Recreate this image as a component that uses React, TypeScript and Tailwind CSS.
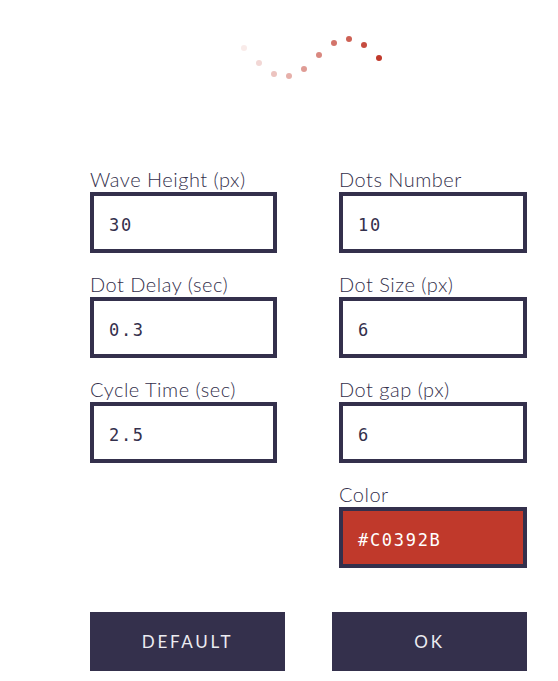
const offsets = [48, 63, 74, 76, 69, 55, 43, 39, 45, 58];

const fields = [
  { label: "Wave Height (px)", value: "30" },
  { label: "Dots Number", value: "10" },
  { label: "Dot Delay (sec)", value: "0.3" },
  { label: "Dot Size (px)", value: "6" },
  { label: "Cycle Time (sec)", value: "2.5" },
  { label: "Dot gap (px)", value: "6" },
];

function Field({ label, value, color }: { label: string; value: string; color?: boolean }) {
  return (
    <div className="flex flex-col">
      <label className="h-[24px] mb-[2px] pt-[1px] text-[20px] leading-[24px] font-light tracking-[0.5px] text-[#34304c]">{label}</label>
      <div
        className={
          "h-[61px] border-4 border-[#34304c] flex items-center pl-[15px] pt-[6px] font-['DejaVu_Sans_Mono',monospace] text-[17px] tracking-[0.1em] " +
          (color ? "bg-[#C0392B] text-white" : "bg-white text-[#34304c]")
        }
      >
        {value}
      </div>
    </div>
  );
}

export default function App() {
  return (
    <div className="w-[558px] h-[681px] bg-white font-['Lato',sans-serif] overflow-hidden">
      <div className="h-[166px] flex justify-center pl-[64px]">
        <div className="relative w-[141px] h-[100px]">
          {offsets.map((y, i) => (
            <span
              key={i}
              className="absolute w-[6px] h-[6px] rounded-full bg-[#C0392B]"
              style={{ left: i * 15, top: y - 3, opacity: 0.1 + i * 0.1 }}
            />
          ))}
        </div>
      </div>
      <div className="ml-[90px] w-[437px]">
        <div className="grid grid-cols-[187px_188px] gap-x-[62px] gap-y-[18px]">
          {fields.map((f) => (
            <Field key={f.label} label={f.label} value={f.value} />
          ))}
          <div />
          <Field label="Color" value="#C0392B" color />
        </div>
        <div className="mt-[44px] flex justify-between">
          <button className="w-[195px] h-[59px] bg-[#34304c] text-[#ececf1] text-[17px] tracking-[0.16em]">DEFAULT</button>
          <button className="w-[195px] h-[59px] bg-[#34304c] text-[#ececf1] text-[17px] tracking-[0.16em]">OK</button>
        </div>
      </div>
    </div>
  );
}
